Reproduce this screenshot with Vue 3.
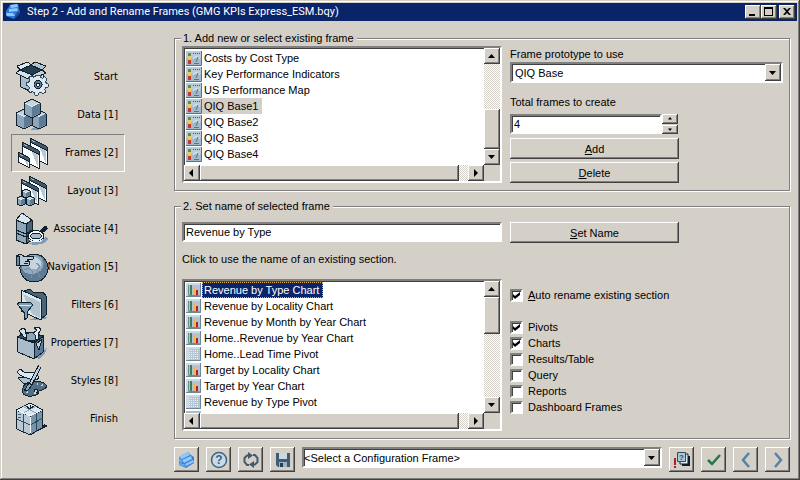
<script setup>
import { ref } from 'vue'

const INK = '#10202c'
const LIGHT = '#c4d4e0'
const MID = '#8ea6ba'
const DEEP = '#5d7b94'
const SHADE = '#7f9db8'

// Isometric cube: top, left and right faces around a centre point
const cube = (x, y, w, h) => {
  const q = w / 2
  return [
    { d: `M${x} ${y}l${w} ${q}v${h}l${-w} ${q}l${-w} ${-q}v${-h}z`, f: MID },
    { d: `M${x} ${y + 1}l${w - 1} ${q - 0.5}l${1 - w} ${q - 0.5}l${1 - w} ${0.5 - q}z`, f: LIGHT, s: 'none' },
    { d: `M${x + w - 0.5} ${y + q + 0.5}l${0.5 - w} ${q - 0.5}v${h - 1}l${w - 0.5} ${0.5 - q}z`, f: DEEP, s: 'none' },
    { d: `M${x - w + 1} ${y + q}l${w - 1} ${q - 0.5}l${w - 1} ${0.5 - q}`, s: '#e4edf3' },
  ]
}
const pane = (x, y, w, h) => {
  const s = w / 2
  return [
    { d: `M${x} ${y}l${w} ${s}v${h}l${-w} ${-s}z`, f: '#fbfdfe' },
    { d: `M${x + w * 0.55} ${y + 4 + s * 0.55}L${x + w - 1} ${y + s + 4}v${h - 5}z`, f: '#b9cad6', s: 'none' },
    { d: `M${x} ${y}l${w} ${s}v4l${-w} ${-s}z`, f: '#40586a' },
    { d: `M${x + 2} ${y + 2.5}l3 1.5`, s: '#a8bccb' },
  ]
}

const steps = [
  { label: 'Start', icon: [
    { d: 'M5 8L14 4L26 8L25 13L17 17L5 12z', f: '#263d50' },
    { d: 'M4 10L16 15V31L5 26z', f: '#a9bccb' },
    { d: 'M16 15L27 9V25L16 31z', f: '#d6e2ea' },
    { d: 'M4 9L1 5L12 1L15 4z', f: '#dce8ef' },
    { d: 'M15 4L19 1L30 5L26 9z', f: '#b4c6d4' },
    { d: 'M4 9L0 12L12 18L16 14z', f: '#d5e2ea' },
    { d: 'M16 14L19 17L30 12L26 9z', f: '#c3d2dd' },
    { d: 'M20 14h4l.5 2.5l2 .8l2.2-1.6l2.4 2.5l-1.5 2.2l.8 2l1.6.6v3.4l-2.4.5l-.8 2l1 2l-2.7 2l-2-1.5l-2.2.7l-1 2h-3l-.6-2.6l-2-1l-2.3 1.3l-2-2.5l1.4-2l-.6-2l-2.3-.8v-3l2.5-.6l.8-2l-1.2-2l2.6-2.2l2 1.4l1.900-.8z', f: '#dfe8ee', s: '#334a5b' },
    { d: 'M22 19.5a4 4 0 1 0 .1 0z', f: '#5d7b94' },
    { d: 'M22 22a1.6 1.6 0 1 0 .1 0z', f: '#f4f8fa' },
  ] },
  { label: 'Data [1]', icon: [
    { d: 'M14 31L27 23L32 26L22 31z', f: SHADE, s: 'none' },
    ...cube(8, 10, 8, 12), ...cube(23, 11, 7, 12), ...cube(16, 0, 8, 11),
  ] },
  { label: 'Frames [2]', icon: [...pane(14, 1, 17, 18), ...pane(6, 5, 17, 18), ...pane(2, 15, 11, 10)] },
  { label: 'Layout [3]', icon: [
    ...pane(13, 1, 17, 17), ...pane(5, 4, 17, 17),
    ...cube(10, 14, 4, 5), ...cube(5, 21, 4, 6), ...cube(14, 21, 4, 6),
  ] },
  { label: 'Associate [4]', icon: [
    { d: 'M12 31L30 24L32 26L29 30L20 32z', f: SHADE, s: 'none' },
    { d: 'M6 0L16 7L10 11L0 7z', f: '#dce8ef' },
    { d: 'M0 7L10 11V31L0 27z', f: '#8ea6ba' },
    { d: 'M10 11L16 7V27L10 31z', f: '#4b6578' },
    { d: 'M0 17L10 21L16 17M0 20L10 24L16 20' },
    { d: 'M25 19L31 14', w: 4 },
    { d: 'M12 23a8 5.5 0 1 0 16 0a8 5.5 0 1 0 -16 0z', f: '#f4f8fa' },
    { d: 'M14.500 23a5.500 3 0 1 0 11 0a5.500 3 0 1 0 -11 0z', f: '#a9bccb' },
    { d: 'M13 26c3 4 11 4 14 0', s: '#e8f0f4' },
  ] },
  { label: 'Navigation [5]', icon: [
    { d: 'M18 3a14 14 0 1 0 .1 0z', f: '#5d7b94' },
    { d: 'M18 4a11 11 0 0 1 10 8c0 7-7 12-15 11c-5-1-8-5-7-10c2-6 6-9 12-9z', f: '#93abbd', s: 'none' },
    { d: 'M17 6c5 0 8 3 8 7s-5 6-9 5c-5-1-6-10 1-12z', f: '#c4d4e0', s: 'none' },
    { d: 'M8 19l5-2l4 4l-2 6M20 12l4 3l-3 5l3 6M26 8l2 6', s: '#7890a3' },
    { d: 'M0 5L5 3L9 6L17 5V8L11 9L14 11L13 14L7 15L0 14z', f: '#b9cad6' },
    { d: 'M0 5h3v9h-3z', f: '#6f8ca3' },
    { d: 'M9 10l4 1M8 12l4 1' },
  ] },
  { label: 'Filters [6]', icon: [
    { d: 'M12 31L26 27L32 29L24 31z', f: SHADE, s: 'none' },
    { d: 'M8 2L14 0L18 4L27 3L30 7V26L25 30z', f: '#4b6578' },
    { d: 'M5 1L25 10V31L5 22z', f: '#dce8ef' },
    { d: 'M7 5L24 13V29L16 25z', f: '#b3c4d1', s: 'none' },
    { d: 'M1 15L4 13H14L17 16L11 23V29L8 31V23z', f: '#7f9bb0' },
    { d: 'M3 16H15', s: '#dce8ef' },
  ] },
  { label: 'Properties [7]', icon: [
    { d: 'M20 31L31 21L29 27L23 32z', f: SHADE, s: 'none' },
    { d: 'M1 10L10 5L28 9L18 15z', f: '#344b5b' },
    { d: 'M8 10L3 4L7 1L10 3L9 6L14 12z', f: '#d3e0e9' },
    { d: 'M16 13V7L21 3L18 1L23 0L25 3L22 7V12z', f: '#e2ebf0' },
    { d: 'M10 7L16 5L19 8V13H10z', f: '#8ea6ba' },
    { d: 'M1 10L18 16V32L2 25z', f: '#a9bccb' },
    { d: 'M18 16L28 9L27 25L18 32z', f: '#5d7b94' },
    { d: 'M20 17L26 12L23 23z', f: '#c4d4e0' },
  ] },
  { label: 'Styles [8]', icon: [
    { d: 'M1 7L4 4L8 7L19 8L23 12L21 15L12 14L4 10z', f: '#dce8ef' },
    { d: 'M2 13L8 12L17 15L18 18L8 19L5 16z', f: '#aec1cf' },
    { d: 'M7 23C8 16 22 15 28 18C34 22 28 25 23 26C23 31 10 34 6 27z', f: '#526f86' },
    { d: 'M20 24a2 2 0 1 0 .1 0z', f: '#d4d0c8' },
    { d: 'M11 27l1 1M18 28l2 0M26 20l1 1M21 19l1 0', s: '#c4d4e0', w: 2 },
    { d: 'M24 1L14 20', w: 4 },
    { d: 'M24 1L14 20', s: '#bfd0dd', w: 2 },
    { d: 'M13 18L16 20L12 25L8 26z', f: '#8ea6ba' },
  ] },
  { label: 'Finish', icon: [
    { d: 'M24 27L32 23L28 21z', f: '#10202c', s: 'none' },
    { d: 'M14 0L27 7L14 13L0 7z', f: '#dce8ef' },
    { d: 'M0 7L14 13V32L1 26z', f: '#b9cad6' },
    { d: 'M27 7L14 13V32L26 25z', f: '#7892a6' },
    { d: 'M1 16L14 22L27 15M7 10V29M20 10V29', s: '#30495b' },
    { d: 'M7 3.500L20 10M20 3.500L7 10', s: '#8ea6ba' },
    { d: 'M1 7L14 13L26 7M14 14V30', s: '#eef4f7' },
    { d: 'M10 3l4 3l4-3M14 6v-4' },
    { d: 'M2 11l3 1M2 14l3 1', s: '#4b6578' },
  ] },
]

const frames = ['Costs by Cost Type', 'Key Performance Indicators', 'US Performance Map', 'QIQ Base1', 'QIQ Base2', 'QIQ Base3', 'QIQ Base4']
const sections = [
  ['Revenue by Type Chart', 'chart'],
  ['Revenue by Locality Chart', 'chart'],
  ['Revenue by Month by Year Chart', 'chart'],
  ['Home..Revenue by Year Chart', 'chart'],
  ['Home..Lead Time Pivot', 'pivot'],
  ['Target by Locality Chart', 'chart'],
  ['Target by Year Chart', 'chart'],
  ['Revenue by Type Pivot', 'pivot'],
]

const step = ref(2)
const frame = ref(3)
const section = ref(0)
const total = ref('4')
const name = ref('Revenue by Type')
const autoRename = ref(true)
const kinds = ref([
  { label: 'Pivots', on: true },
  { label: 'Charts', on: true },
  { label: 'Results/Table', on: false },
  { label: 'Query', on: false },
  { label: 'Reports', on: false },
  { label: 'Dashboard Frames', on: false },
])
</script>

<template>
  <div class="window">
    <header class="titlebar">
      <svg class="app-icon" viewBox="0 0 16 16"><path d="M1 7L5 1L13 0L15 9L9 15L1 12z" fill="#2f78d4" /><path d="M5 1L12 0L13 3L6 4zM4 5L12 4L13 7L4 8zM1 9L8 9L10 12L2 12z" fill="#8cc8ff" /><path d="M10 12L13 7L15 9L9 15z" fill="#1c4a94" /></svg>
      <h1>Step 2 - Add and Rename Frames (GMG KPIs Express_ESM.bqy)</h1>
      <div class="caption-buttons">
        <button type="button" class="raised cap" aria-label="Minimize"><svg viewBox="0 0 12 10"><path d="M2 7h6v2h-6z" /></svg></button>
        <button type="button" class="raised cap" aria-label="Maximize"><svg viewBox="0 0 12 10"><path fill-rule="evenodd" d="M1 0h9v9h-9zM2 2v6h7v-6z" /></svg></button>
        <button type="button" class="raised cap close" aria-label="Close"><svg viewBox="0 0 12 10"><path d="M2 1h2l2 2l2-2h2l-3 3.500l3 3.500h-2l-2-2l-2 2h-2l3-3.500z" /></svg></button>
      </div>
    </header>

    <div class="body">
      <nav class="steps">
        <button v-for="(s, i) in steps" :key="s.label" type="button" class="step" :class="{ current: step === i }" @click="step = i">
          <svg class="step-icon" viewBox="-1 -1 34 34" shape-rendering="crispEdges"><path v-for="(p, k) in s.icon" :key="k" :d="p.d" :fill="p.f || 'none'" :stroke="p.s || INK" :stroke-width="p.w || 1" stroke-linejoin="round" /></svg>
          <span>{{ s.label }}</span>
        </button>
      </nav>

      <main class="main">
        <fieldset class="group first">
          <legend>1. Add new or select existing frame</legend>
          <div class="columns">
            <div class="list sunken">
              <ul class="rows" role="listbox" aria-label="Frames">
                <li v-for="(f, i) in frames" :key="f" role="option" :aria-selected="frame === i" @click="frame = i">
                  <svg class="row-icon" viewBox="0 0 16 16"><path d="M0 1h15v14h-15z" fill="#b8ccda" /><path d="M0 8h15v7h-15z" fill="#a3b9c8" /><path d="M15.500 1v14.500h-15.500" fill="none" stroke="#56728a" /><path d="M2 3h3v3h-3z" fill="#4f9460" /><path d="M2 6h3v4h-3z" fill="#f0c860" /><path d="M2 10h3v4h-3z" fill="#c03a30" /><path d="M7 3.500h7" stroke="#3c566a" stroke-dasharray="1 1" /><path d="M7 9c2-3 5-3 7 0" fill="none" stroke="#e2ebf1" /><path d="M8 13.500h5M10 12l2-5" fill="none" stroke="#56748a" /></svg>
                  <span :class="{ chosen: frame === i }">{{ f }}</span>
                </li>
              </ul>
              <div class="vbar">
                <button type="button" class="raised arrow" aria-label="Scroll up"><svg viewBox="0 0 8 8"><path d="M0 6L3.500 2L7 6z" /></svg></button>
                <div class="track"></div>
                <div class="raised thumb frame-thumb"></div>
                <button type="button" class="raised arrow" aria-label="Scroll down"><svg viewBox="0 0 8 8"><path d="M0 2L3.500 6L7 2z" /></svg></button>
              </div>
              <div class="hbar">
                <button type="button" class="raised arrow" aria-label="Scroll left"><svg viewBox="0 0 8 8"><path d="M5 0L1 4L5 8z" /></svg></button>
                <div class="raised thumb wide"></div>
                <div class="track"></div>
                <button type="button" class="raised arrow" aria-label="Scroll right"><svg viewBox="0 0 8 8"><path d="M2 0L6 4L2 8z" /></svg></button>
              </div>
            </div>

            <div class="form">
              <label for="prototype">Frame prototype to use</label>
              <div class="select sunken">
                <select id="prototype"><option>QIQ Base</option></select>
                <span class="raised drop"><svg viewBox="0 0 8 8"><path d="M0 2L3.500 6L7 2z" /></svg></span>
              </div>
              <label for="total" class="total-label">Total frames to create</label>
              <div class="spin">
                <input id="total" v-model="total" class="text sunken" type="text" />
                <div class="spin-buttons">
                  <button type="button" class="raised" aria-label="More" @click="total = String(+total + 1)"><svg viewBox="0 0 4 3"><path d="M0 2.500L2 0L4 2.500z" /></svg></button>
                  <button type="button" class="raised" aria-label="Fewer" @click="total = String(Math.max(0, +total - 1))"><svg viewBox="0 0 4 3"><path d="M0 .5L2 3L4 .5z" /></svg></button>
                </div>
              </div>
              <button type="button" class="raised push"><span><u>A</u>dd</span></button>
              <button type="button" class="raised push"><span><u>D</u>elete</span></button>
            </div>
          </div>
        </fieldset>

        <fieldset class="group second">
          <legend>2. Set name of selected frame</legend>
          <div class="columns">
            <div class="naming">
              <input v-model="name" class="text sunken" type="text" aria-label="Frame name" />
              <p>Click to use the name of an existing section.</p>
              <div class="list sunken">
                <ul class="rows section-rows" role="listbox" aria-label="Sections">
                  <li v-for="([s, kind], i) in sections" :key="s" role="option" :aria-selected="section === i" @click="section = i">
                    <svg class="row-icon" viewBox="0 0 16 16">
                      <path d="M0 1h15v14h-15z" fill="#b4c5d1" /><path d="M0 1h15v2h-12v12h-3z" fill="#cedae2" /><path d="M14.500 1v13.500h-14.500" fill="none" stroke="#6d869a" />
                      <g v-if="kind === 'chart'"><path d="M2.500 3v10.500h11" fill="none" stroke="#6d899d" /><path d="M4 3h2v10h-2z" fill="#38824f" /><path d="M7 5h2v8h-2z" fill="#f2b64c" /><path d="M10 8h2v5h-2z" fill="#b62020" /></g>
                      <path v-else d="M3 4.500h10M3 6.500h10M3 8.500h10M3 10.500h10M3 12.500h10" stroke="#eef3f6" stroke-dasharray="1 1" />
                    </svg>
                    <span :class="{ active: section === i }">{{ s }}</span>
                  </li>
                  <li aria-hidden="true"><svg class="row-icon" viewBox="0 0 16 16"><path d="M0 1h15v14h-15z" fill="#a9bccb" /></svg></li>
                </ul>
                <div class="vbar">
                  <button type="button" class="raised arrow" aria-label="Scroll up"><svg viewBox="0 0 8 8"><path d="M0 6L3.500 2L7 6z" /></svg></button>
                  <div class="raised thumb section-thumb"></div>
                  <div class="track"></div>
                  <button type="button" class="raised arrow" aria-label="Scroll down"><svg viewBox="0 0 8 8"><path d="M0 2L3.500 6L7 2z" /></svg></button>
                </div>
                <div class="hbar">
                  <button type="button" class="raised arrow" aria-label="Scroll left"><svg viewBox="0 0 8 8"><path d="M5 0L1 4L5 8z" /></svg></button>
                  <div class="raised thumb wide"></div>
                  <div class="track"></div>
                  <button type="button" class="raised arrow" aria-label="Scroll right"><svg viewBox="0 0 8 8"><path d="M2 0L6 4L2 8z" /></svg></button>
                </div>
              </div>
            </div>

            <div class="form options">
              <button type="button" class="raised push"><span><u>S</u>et Name</span></button>
              <div class="checks">
                <label class="check auto"><input v-model="autoRename" type="checkbox" /><svg viewBox="0 0 7 7"><path d="M0 2l2 2l5-4v3l-5 4l-2-2z" /></svg><span><u>A</u>uto rename existing section</span></label>
                <label v-for="k in kinds" :key="k.label" class="check"><input v-model="k.on" type="checkbox" /><svg viewBox="0 0 7 7"><path d="M0 2l2 2l5-4v3l-5 4l-2-2z" /></svg><span>{{ k.label }}</span></label>
              </div>
            </div>
          </div>
        </fieldset>

        <footer class="toolbar">
          <button type="button" class="raised tool" aria-label="Home"><svg viewBox="0 0 18 18"><path d="M1 6L10 1L13 4L16 6V12L8 17L1 14z" fill="#3b80d0" /><path d="M1 6L10 1L12 4L4 8zM4 9L13 5L14 8L6 12zM7 13L15 9L16 11L8 15z" fill="#8fc8fc" /><path d="M1 7L4 9V12L1 11zM1 12L6 13L8 16L1 14z" fill="#62a8ee" /></svg></button>
          <button type="button" class="raised tool" aria-label="Help"><svg viewBox="0 0 18 18"><circle cx="9" cy="9" r="7.500" fill="#c9dbe6" stroke="#3c6482" stroke-width="1.500" /><text x="9" y="13" text-anchor="middle" class="mark">?</text></svg></button>
          <button type="button" class="raised tool" aria-label="Refresh"><svg viewBox="0 0 18 18"><path d="M7 14H5L2.500 11V7L5 4.500H7M11 4h2L15.500 7v4L13 13.500h-2" fill="none" stroke="#415a6e" stroke-width="2" /><path d="M6 1l5 3.500l-5 3.500zM12 10v7l-5-3.500z" fill="#415a6e" /></svg></button>
          <button type="button" class="raised tool" aria-label="Save"><svg viewBox="0 0 18 18"><path d="M2 2h14v14h-12l-2-2z" fill="#415b70" /><path d="M5 2h8v6h-8z" fill="#c8d9e5" /><path d="M5 11h8v5h-8z" fill="#9eb4c5" /><path d="M6 12h3v4h-3z" fill="#263d50" /></svg></button>
          <div class="select sunken config">
            <select aria-label="Configuration frame"><option>&lt;Select a Configuration Frame&gt;</option></select>
            <span class="raised drop"><svg viewBox="0 0 8 8"><path d="M0 2L3.500 6L7 2z" /></svg></span>
          </div>
          <button type="button" class="raised tool" aria-label="Unresolved frames"><svg viewBox="0 0 18 18"><path d="M1 7h2v7h-2zM1 15h2v2h-2z" fill="#a32232" /><path d="M9 5h8v10h-8z" fill="#10202c" /><path d="M7 3h8v10h-8z" fill="#dce8ef" stroke="#10202c" /><path d="M4.500 1.500h8v9h-8z" fill="#a9c9d9" stroke="#30495b" /><text x="8.500" y="9" text-anchor="middle" class="small-mark">?</text></svg></button>
          <button type="button" class="raised tool" aria-label="Apply"><svg viewBox="0 0 18 18"><path d="M3 9l4 4l8-9" fill="none" stroke="#26764b" stroke-width="2.500" /></svg></button>
          <button type="button" class="raised tool" aria-label="Back"><svg viewBox="0 0 18 18"><path d="M12 2l-6 7l6 7" fill="none" stroke="#5581a8" stroke-width="2.500" /></svg></button>
          <button type="button" class="raised tool" aria-label="Next"><svg viewBox="0 0 18 18"><path d="M6 2l6 7l-6 7" fill="none" stroke="#5581a8" stroke-width="2.500" /></svg></button>
        </footer>
      </main>
    </div>
  </div>
</template>

<style>
body {
  margin: 0;
  background: #d4d0c8;
}
</style>

<style scoped>
* { box-sizing: border-box; }
.window {
  min-height: 100vh;
  padding: 3px;
  background: #d4d0c8;
  border: 0;
  box-shadow: inset -1px -1px #404040, inset 1px 1px #d4d0c8, inset -2px -2px #808080, inset 2px 2px #fff;
  font: 11px/16px "Liberation Sans", Arial, sans-serif;
  color: #000;
}
button, input, select { font: inherit; color: inherit; margin: 0; border-radius: 0; }
button { padding: 0; }
svg { display: block; overflow: visible; }
.raised {
  display: flex;
  align-items: center;
  justify-content: center;
  background: #d4d0c8;
  border: 0;
  box-shadow: inset -1px -1px #404040, inset 1px 1px #fff, inset -2px -2px #808080;
}
.sunken {
  border: 2px solid;
  border-color: #808080 #fff #fff #808080;
  box-shadow: inset 1px 1px #404040;
  background: #fff;
}
.titlebar {
  display: flex;
  align-items: center;
  height: 18px;
  padding: 0 2px;
  background: #0a246a;
  color: #fff;
}
.app-icon { width: 16px; height: 16px; }
h1 { flex: 1; margin: 0 0 0 6px; font: 400 11px/18px Roboto, "Liberation Sans", sans-serif; }
.caption-buttons { display: flex; }
.cap { width: 16px; height: 14px; }
.cap svg { width: 12px; height: 10px; }
.close { margin-left: 2px; }
.body { display: flex; padding: 10px 7px 0 8px; }
.steps { flex: 0 0 114px; padding-top: 27px; margin-right: 49px; }
.step {
  display: flex;
  align-items: center;
  justify-content: space-between;
  width: 100%;
  height: 38px;
  padding: 0 6px 0 3px;
  border: 1px solid transparent;
  background: none;
  font: 11px/16px "DejaVu Sans Condensed", "DejaVu Sans", sans-serif;
  white-space: nowrap;
}
.step.current { border-color: #808080 #fff #fff #808080; }
.step-icon { flex: none; width: 34px; height: 34px; }
.step span { margin-left: -4px; }
.main { flex: 1; min-width: 0; }
.group {
  min-width: 0;
  margin: 0;
  padding: 0 6px 7px 7px;
  border: 1px solid #808080;
  box-shadow: inset 1px 1px #fff, 1px 1px #fff;
}
legend { margin-left: -1px; padding: 0 3px 0 2px; background: #d4d0c8; line-height: 14px; }
.second { margin-top: 8px; }
.columns { display: flex; gap: 8px; }
.first .columns { padding-top: 1px; }
.second .columns { padding-top: 9px; }
.naming, .first .list { flex: 0 1 320px; min-width: 0; }
.list {
  display: grid;
  grid-template: minmax(0, 1fr) 16px / minmax(0, 1fr) 16px;
  height: 137px;
  background: #d4d0c8;
}
.naming .list { height: 152px; }
.rows { overflow: hidden; margin: 0; padding: 2px; list-style: none; background: #fff; box-shadow: inset 1px 1px #404040; }
.section-rows { padding-top: 1px; }
.rows li { display: flex; height: 16px; }
.row-icon { flex: none; width: 16px; height: 16px; }
.rows span { padding: 0 4px 0 2px; white-space: nowrap; }
.rows .chosen { background: #d4d0c8; }
.rows .active { background: #0a246a; color: #fff; outline: 1px dotted #e0b050; outline-offset: -1px; }
.vbar { display: flex; flex-direction: column; }
.hbar { display: flex; }
.arrow { flex: none; width: 16px; height: 16px; }
.arrow svg, .drop svg { width: 8px; height: 8px; }
.thumb { flex: none; }
.track { flex: 1; background: repeating-conic-gradient(#fff 0 25%, #d4d0c8 0 50%) 0 0 / 2px 2px; }
.frame-thumb { height: 40px; }
.section-thumb { height: 37px; }
.wide { flex: 0 1 259px; }
.form { flex: 1; min-width: 0; display: flex; flex-direction: column; align-items: flex-start; }
.form > label { line-height: 16px; }
.select { display: grid; align-self: stretch; height: 21px; }
.select select { grid-area: 1 / 1; appearance: none; width: 100%; border: 0; background: none; padding: 0 18px 0 3px; }
.drop { grid-area: 1 / 1; justify-self: end; width: 16px; pointer-events: none; }
.total-label { margin: 11px 0 4px; }
.spin { display: flex; width: 168px; max-width: 100%; height: 20px; margin-bottom: 4px; }
.text { display: block; width: 100%; min-width: 0; height: 20px; padding: 0 2px; outline: 0; }
.spin-buttons { flex: none; width: 16px; display: grid; gap: 1px; }
.spin-buttons svg { width: 4px; height: 3px; }
.push { width: 169px; max-width: 100%; height: 21px; flex: none; }
.push + .push { margin-top: 3px; }
.naming p { margin: 9px 0 12px; line-height: 16px; }
.checks { margin-top: 44px; }
.check { display: grid; grid-template-columns: 13px auto; align-items: center; column-gap: 5px; height: 16px; }
.check input {
  grid-area: 1 / 1;
  appearance: none;
  width: 13px;
  height: 13px;
  border: 2px solid;
  border-color: #808080 #fff #fff #808080;
  box-shadow: inset 1px 1px #404040;
  background: #fff;
}
.check svg { grid-area: 1 / 1; justify-self: center; width: 7px; height: 7px; visibility: hidden; pointer-events: none; }
.check input:checked + svg { visibility: visible; }
.auto { margin-bottom: 16px; }
.toolbar { display: flex; gap: 7px; margin-top: 8px; padding-bottom: 5px; }
.tool { flex: none; width: 25px; height: 25px; }
.tool svg { width: 18px; height: 18px; }
.config { flex: 1; min-width: 0; }
.config select { padding-left: 0; }
.mark { font-size: 12px; font-weight: 700; fill: #3c6482; }
.small-mark { font-size: 8px; font-weight: 700; fill: #30495b; }
</style>
